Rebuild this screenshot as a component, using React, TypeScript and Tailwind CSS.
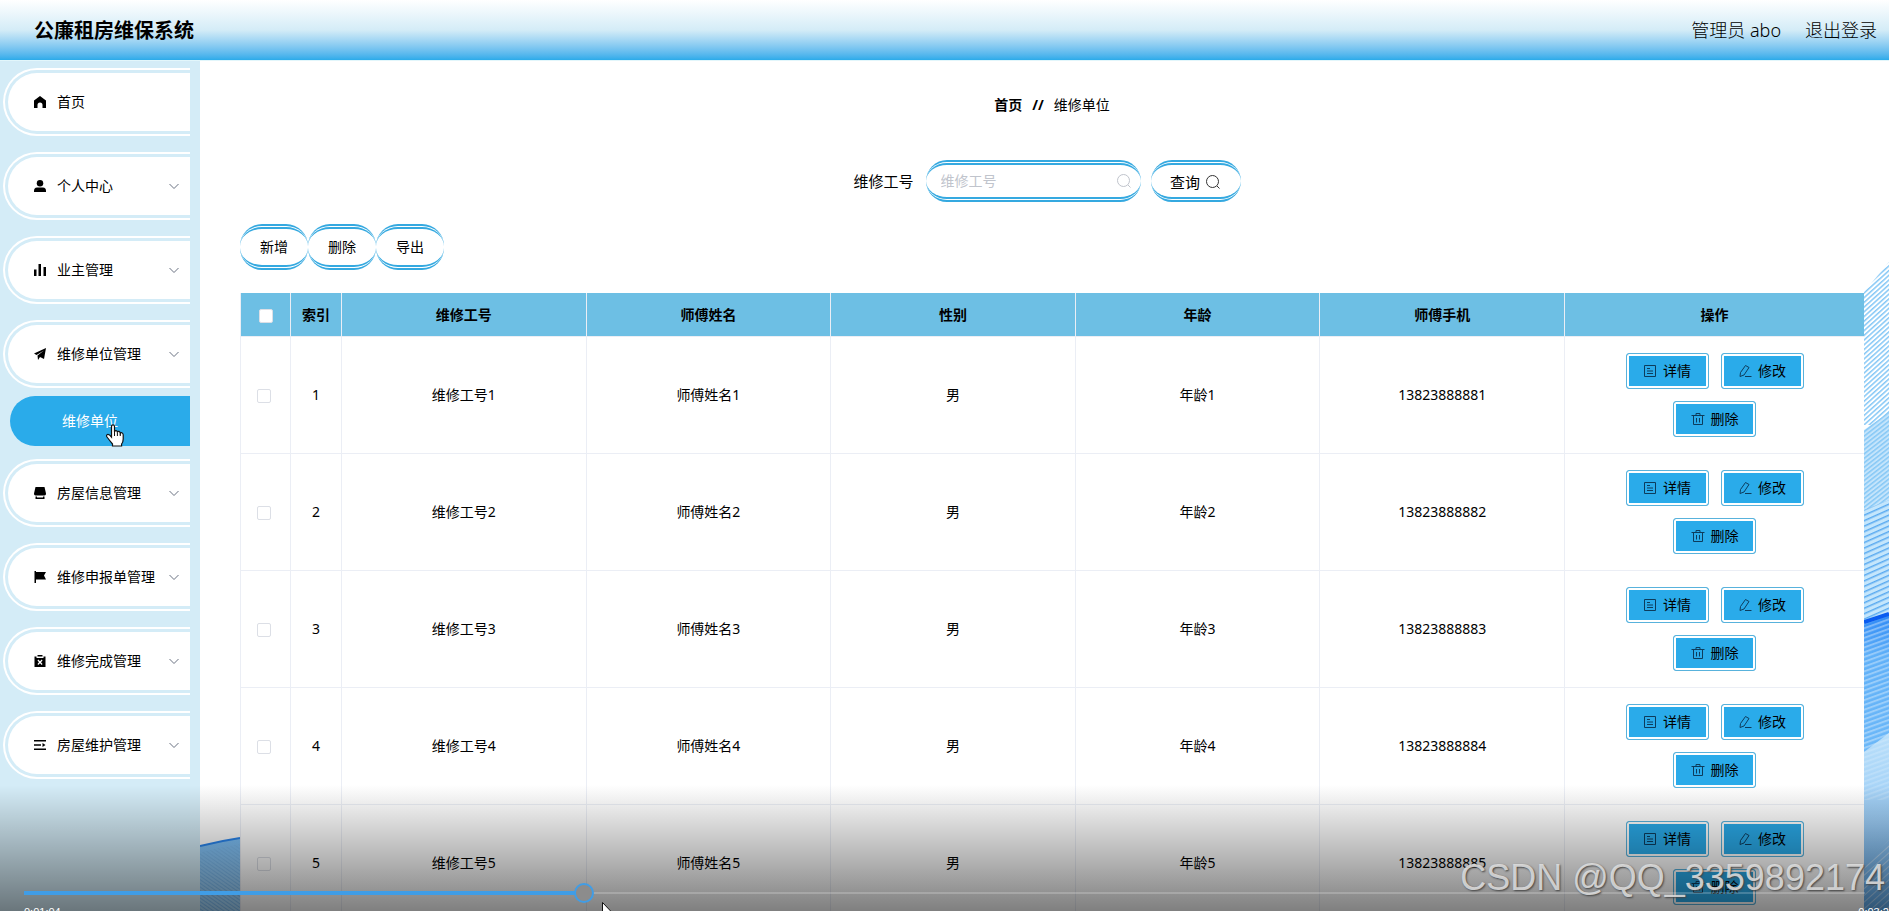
import React, { useState } from 'react';

type MenuItem = {
  title: string;
  icon: React.ReactNode;
  expandable?: boolean;
  children?: string[];
};

const menuItems: MenuItem[] = [
  {
    title: '首页',
    icon: <path d="M12 0 24 9v15h-7v-6a5 5 0 0 0-10 0v6H0V9z" />,
  },
  {
    title: '个人中心',
    expandable: true,
    icon: (
      <>
        <circle cx="12" cy="6.500" r="6.500" />
        <path d="M6 15h12c4 0 6 3 6 7v2H0v-2c0-4 2-7 6-7z" />
      </>
    ),
  },
  {
    title: '业主管理',
    expandable: true,
    icon: <path d="M0 11h5v13H0zM9 0h5v24H9zM19 6h5v18h-5z" />,
  },
  {
    title: '维修单位管理',
    expandable: true,
    children: ['维修单位'],
    icon: <path d="M24 0 20 22l-8-4-4 6-1-9L20 5 5 14l-5-3z" />,
  },
  {
    title: '房屋信息管理',
    expandable: true,
    icon: <path d="M3 0h18l3 13c0 2-1 4-3 4H3c-2 0-3-2-3-4zM3 19h3v2h12v-2h3v5H3z" />,
  },
  {
    title: '维修申报单管理',
    expandable: true,
    icon: <path d="M1 0h3v2h20l-4 7 4 8H4v7H1z" />,
  },
  {
    title: '维修完成管理',
    expandable: true,
    icon: (
      <>
        <path d="M7 0h10v3H7z" />
        <path
          fillRule="evenodd"
          d="M1 3h4v3h14V3h4v21H1zM7 11l3 3.500L7 18l1.500 2 3.500-3.500 3.500 3.500 1.500-2-3-3.500 3-3.500L15.500 9 12 12.500 8.500 9z"
        />
      </>
    ),
  },
  {
    title: '房屋维护管理',
    expandable: true,
    icon: <path d="M0 2h24v3H0zM0 10.500h14v3H0zM0 19h24v3H0zM17 8l6 4-6 4z" />,
  },
];

const workers = [1, 2, 3, 4, 5].map((n) => ({
  index: n,
  workNo: `维修工号${n}`,
  name: `师傅姓名${n}`,
  gender: '男',
  age: `年龄${n}`,
  phone: `1382388888${n}`,
}));

const columns = ['维修工号', '师傅姓名', '性别', '年龄', '师傅手机'];

const pill =
  'rounded-[22px] border-y-[5px] border-double border-[#35a9e0] bg-white text-black';

function SearchIcon({ className }: { className: string }) {
  return (
    <svg viewBox="0 0 16 16" className={className} fill="none" stroke="currentColor" aria-hidden="true">
      <circle cx="7.500" cy="7.500" r="6" />
      <path d="m12 12 2.500 2.500" />
    </svg>
  );
}

function ChevronIcon() {
  return (
    <svg viewBox="0 0 12 12" className="mr-2.5 h-3 w-3 shrink-0 text-gray-500" fill="none" stroke="currentColor">
      <path d="m1.500 4 4.500 4.500L10.500 4" />
    </svg>
  );
}

function Header() {
  return (
    <header className="flex h-[60px] shrink-0 items-center justify-between bg-linear-to-b from-white via-[#d4ecf7] to-[#2aabea] pr-3 pl-[34px]">
      <h1 className="pt-0.5 text-xl font-bold text-black">公廉租房维保系统</h1>
      <div className="flex items-center gap-6 text-lg font-light text-black">
        <span>管理员 abo</span>
        <button type="button">退出登录</button>
      </div>
    </header>
  );
}

function Sidebar() {
  return (
    <nav className="w-[200px] shrink-0 bg-[#d4ecf7] pt-[7px] pr-2.5 pl-[3px]">
      <ul className="flex flex-col gap-4">
        {menuItems.map((item) => (
          <li key={item.title}>
            <div className="rounded-l-[34px] border-2 border-r-0 border-white py-[3px] pl-[3px]">
              <button
                type="button"
                className="flex h-[58px] w-full items-center rounded-l-[30px] bg-white pl-[26px] text-left text-sm text-black"
              >
                <svg viewBox="0 0 24 24" className="mr-[11px] h-3 w-3 shrink-0" fill="currentColor">
                  {item.icon}
                </svg>
                <span className="flex-1 whitespace-nowrap">{item.title}</span>
                {item.expandable && <ChevronIcon />}
              </button>
            </div>
            {item.children && (
              <ul className="mt-2 -mb-[3px] pl-[7px]">
                {item.children.map((child) => (
                  <li key={child}>
                    <a
                      href="#repair"
                      className="flex h-[50px] items-center rounded-l-[26px] bg-[#2aabea] pl-[52px] text-sm text-white"
                    >
                      {child}
                    </a>
                  </li>
                ))}
              </ul>
            )}
          </li>
        ))}
      </ul>
    </nav>
  );
}

/* Blue wave artwork that shows behind the content */
function WaveBackground() {
  return (
    <>
      <svg viewBox="0 61 25 850" className="absolute right-0 bottom-0 h-[850px] w-[25px]" aria-hidden="true">
        <defs>
          <pattern id="diag" width="5" height="3.500" patternUnits="userSpaceOnUse" patternTransform="rotate(-42)">
            <rect width="5" height="1.500" fill="#86c8f6" />
          </pattern>
          <pattern id="diagSoft" width="5" height="3.500" patternUnits="userSpaceOnUse" patternTransform="rotate(-38)">
            <rect width="5" height="3.500" fill="#c4e4fb" />
            <rect width="5" height="1.500" fill="#86c8f6" />
          </pattern>
          <pattern id="wave" width="5" height="5" patternUnits="userSpaceOnUse" patternTransform="rotate(-24)">
            <rect width="5" height="5" fill="#c4e6fc" />
            <rect width="5" height="1.500" fill="#5aaaf0" />
          </pattern>
          <pattern id="band" width="5" height="4.500" patternUnits="userSpaceOnUse" patternTransform="rotate(-20)">
            <rect width="5" height="2" fill="#ffffff" fillOpacity=".35" />
          </pattern>
          <pattern id="faint" width="5" height="5" patternUnits="userSpaceOnUse" patternTransform="rotate(-42)">
            <rect width="5" height="1" fill="#ffffff" fillOpacity=".4" />
          </pattern>
          <linearGradient id="bandFill" x1="0" y1="0" x2="0" y2="1">
            <stop offset="0" stopColor="#2b87f5" />
            <stop offset=".3" stopColor="#5fb0f8" />
            <stop offset="1" stopColor="#6cb8f8" />
          </linearGradient>
          <linearGradient id="deep" x1="0" y1="0" x2="0" y2="1">
            <stop offset="0" stopColor="#b9dffa" />
            <stop offset=".5" stopColor="#9ccdf6" />
            <stop offset="1" stopColor="#5fa9ea" />
          </linearGradient>
        </defs>
        <path d="M0 292 25 262V425H0z" fill="url(#diag)" />
        <path d="M0 430 25 412V515H0z" fill="url(#diagSoft)" />
        <path d="M0 510 25 500V625H0z" fill="url(#wave)" />
        <path d="M0 621 25 613V755H0z" fill="url(#bandFill)" />
        <path d="M0 621 25 613V755H0z" fill="url(#band)" />
        <path d="M0 622 25 614" stroke="#0a5cf0" strokeWidth="4" />
        <path d="M0 752 25 733V911H0z" fill="url(#deep)" />
        <path d="M0 752 25 733V800H0z" fill="url(#band)" fillOpacity=".5" />
        <path d="M0 864 25 840V911H0z" fill="url(#faint)" />
      </svg>
      <svg viewBox="0 0 40 76" className="absolute bottom-0 left-0 h-[76px] w-10" aria-hidden="true">
        <defs>
          <pattern id="fine" width="4" height="3" patternUnits="userSpaceOnUse" patternTransform="rotate(35)">
            <rect width="4" height="1" fill="#7dbcf0" />
          </pattern>
          <linearGradient id="hill" x1="0" y1="0" x2="0" y2="1">
            <stop offset="0" stopColor="#7cc0f8" />
            <stop offset="1" stopColor="#a8d8fa" />
          </linearGradient>
        </defs>
        <path d="M0 11Q20 6 40 3V76H0z" fill="url(#hill)" />
        <path d="M0 18Q20 12 40 9V76H0z" fill="url(#fine)" />
        <path d="M0 11Q20 6 40 3" fill="none" stroke="#2a86ee" strokeWidth="2" />
      </svg>
    </>
  );
}

const actions = [
  {
    label: '详情',
    icon: (
      <>
        <path d="M1.500 1.500h11v11h-11z" />
        <path d="M4 4.500h3M4 7h6M4 9.500h6" />
      </>
    ),
  },
  {
    label: '修改',
    icon: (
      <>
        <path d="M7.500 1.500 11 3.500 6 11l-4 1.500L2.500 8.500z" />
        <path d="M7 12.500h6.500" />
      </>
    ),
  },
  {
    label: '删除',
    icon: (
      <>
        <path d="M.5 3.500h13M5 3.500v-2h4v2M2.500 3.500v9h9v-9" />
        <path d="M5.500 6v4.500M8.500 6v4.500" />
      </>
    ),
  },
];

function ActionButtons() {
  return (
    <div className="flex flex-wrap justify-center gap-3 px-10">
      {actions.map((action) => (
        <button
          key={action.label}
          type="button"
          className="flex h-9 w-[83px] items-center justify-center gap-1.5 rounded-[3px] border border-[#58b2dc] bg-[#2aabea] text-sm text-black shadow-[inset_0_0_0_2px_#fff]"
        >
          <svg viewBox="0 0 14 14" className="h-3.5 w-3.5 text-[#0d3c5c]" fill="none" stroke="currentColor">
            {action.icon}
          </svg>
          {action.label}
        </button>
      ))}
    </div>
  );
}

function CheckBox({ label, checked, onChange }: { label: string; checked: boolean; onChange: () => void }) {
  return (
    <input
      type="checkbox"
      aria-label={label}
      checked={checked}
      onChange={onChange}
      className="h-3.5 w-3.5 appearance-none rounded-[2px] border border-[#dcdfe6] bg-white align-middle checked:bg-[#409eff]"
    />
  );
}

function WorkerTable() {
  const [selected, setSelected] = useState<number[]>([]);
  const allSelected = selected.length === workers.length;

  const toggleRow = (index: number) => {
    setSelected((prev) => (prev.includes(index) ? prev.filter((i) => i !== index) : [...prev, index]));
  };

  return (
    <table className="mt-[23px] w-full table-fixed border-separate border-spacing-0 border-l border-[#ebeef5] bg-white text-center text-sm text-black">
      <colgroup>
        <col className="w-[50px]" />
        <col className="w-[51px]" />
        <col />
        <col />
        <col />
        <col />
        <col />
        <col className="w-[299px]" />
      </colgroup>
      <thead>
        <tr className="h-11 bg-[#6dbfe4]">
          <th className="border-r border-b border-[#ebeef5]">
            <CheckBox
              label="全选"
              checked={allSelected}
              onChange={() => setSelected(allSelected ? [] : workers.map((w) => w.index))}
            />
          </th>
          <th className="border-r border-b border-[#ebeef5]">索引</th>
          {columns.map((column) => (
            <th key={column} className="border-r border-b border-[#ebeef5]">
              {column}
            </th>
          ))}
          <th className="border-b border-[#ebeef5]">操作</th>
        </tr>
      </thead>
      <tbody>
        {workers.map((worker) => (
          <tr key={worker.index} className="h-[117px]">
            <td className="border-r border-b border-[#ebeef5] pr-1">
              <CheckBox
                label={`选择${worker.workNo}`}
                checked={selected.includes(worker.index)}
                onChange={() => toggleRow(worker.index)}
              />
            </td>
            <td className="border-r border-b border-[#ebeef5]">{worker.index}</td>
            <td className="border-r border-b border-[#ebeef5]">{worker.workNo}</td>
            <td className="border-r border-b border-[#ebeef5]">{worker.name}</td>
            <td className="border-r border-b border-[#ebeef5]">{worker.gender}</td>
            <td className="border-r border-b border-[#ebeef5]">{worker.age}</td>
            <td className="border-r border-b border-[#ebeef5]">{worker.phone}</td>
            <td className="border-b border-[#ebeef5]">
              <ActionButtons />
            </td>
          </tr>
        ))}
      </tbody>
    </table>
  );
}

function MainContent() {
  const [keyword, setKeyword] = useState('');

  return (
    <main className="relative min-w-0 flex-1 overflow-hidden bg-white pt-[34px] pr-[25px] pl-10">
      <WaveBackground />
      <div className="relative">
        <div className="flex h-5 items-center justify-center gap-2.5 text-sm text-black">
          <a href="#home" className="font-bold">
            首页
          </a>
          <span className="font-bold">//</span>
          <span>维修单位</span>
        </div>

        <form className="mt-[45px] flex items-center justify-center" onSubmit={(e) => e.preventDefault()}>
          <label htmlFor="workNo" className="mr-3 text-[15px] text-black">
            维修工号
          </label>
          <div className={`${pill} mr-2.5 flex h-[42px] w-[215px] items-center pr-[9px] pl-[15px]`}>
            <input
              id="workNo"
              type="text"
              placeholder="维修工号"
              value={keyword}
              onChange={(e) => setKeyword(e.target.value)}
              className="min-w-0 flex-1 bg-transparent text-sm outline-none placeholder:text-[#c0c4cc]"
            />
            <SearchIcon className="h-4 w-4 text-[#c0c4cc]" />
          </div>
          <button
            type="submit"
            className={`${pill} mr-2.5 flex h-[42px] w-[90px] items-center justify-center gap-[5px] pt-0.5 text-[15px]`}
          >
            查询
            <SearchIcon className="h-4 w-4 text-[#333]" />
          </button>
        </form>

        <div className="mt-[22px] flex">
          <button type="button" className={`${pill} h-[46px] w-[68px] text-sm`}>
            新增
          </button>
          <button type="button" className={`${pill} h-[46px] w-[68px] text-sm`}>
            删除
          </button>
          <button type="button" className={`${pill} h-[46px] w-[68px] text-sm`}>
            导出
          </button>
        </div>

        <WorkerTable />
      </div>
    </main>
  );
}

function PlayerOverlay() {
  const [position, setPosition] = useState(30.2);

  return (
    <div className="absolute inset-x-0 bottom-0 h-[126px] overflow-hidden bg-linear-to-b from-transparent to-black/50 font-['Liberation_Sans',sans-serif]">
      <div className="relative mt-[98px] mr-6 ml-6 flex h-5 items-center">
        <div className="absolute inset-x-0 h-0.5 bg-white/20" />
        <div className="absolute left-0 h-1 bg-[#409de6]" style={{ width: `${position}%` }} />
        <input
          type="range"
          aria-label="播放进度"
          min="0"
          max="100"
          step="0.1"
          value={position}
          onChange={(e) => setPosition(Number(e.target.value))}
          className="relative h-5 w-full appearance-none bg-transparent [&::-webkit-slider-thumb]:h-5 [&::-webkit-slider-thumb]:w-5 [&::-webkit-slider-thumb]:appearance-none [&::-webkit-slider-thumb]:rounded-full [&::-webkit-slider-thumb]:border-2 [&::-webkit-slider-thumb]:border-solid [&::-webkit-slider-thumb]:border-[#409de6] [&::-webkit-slider-thumb]:bg-[#8c8c8c]"
        />
      </div>
      <div className="-mr-1.5 ml-6 flex justify-between pt-px text-[11px] leading-4 text-white">
        <span>0:01:04</span>
        <span>0:03:28</span>
      </div>
    </div>
  );
}

export default function App() {
  return (
    <div className="relative flex h-screen flex-col overflow-hidden bg-white font-['Noto_Sans','Noto_Sans_CJK_SC',sans-serif]">
      <Header />
      <div className="flex min-h-0 flex-1 border-t border-[#e2f6fb]">
        <Sidebar />
        <MainContent />
      </div>

      <PlayerOverlay />

      {/* Pointers */}
      <svg viewBox="0 0 18 23" className="absolute top-[424px] left-[106px] h-[23px] w-[18px]" fill="#fff" stroke="#111">
        <path
          d="M5.500 13V2.500Q5.500.8 7 .8t1.500 1.700V8q.3-1.500 1.600-1.300T11.400 8.500q.4-1.500 1.600-1.100t1.300 2q.5-1 1.600-.6t1.300 2V15q0 3-1.600 5v2H6.500v-2Q4 17 1 13q-1-2 .5-2.500T5.500 13z"
          strokeWidth="1.200"
        />
        <path d="M8.500 8v4M11.400 8.500V12M14.300 9.500V12" strokeWidth="1" />
      </svg>
      <svg viewBox="0 0 12 18" className="absolute top-[902px] left-[602px] h-[18px] w-3" fill="#fff" stroke="#111">
        <path d="M.5.5v15l3.500-3 2.500 5 2-1-2.500-5h5z" />
      </svg>

      <div className="absolute right-1 bottom-[13px] font-['Liberation_Sans',sans-serif] text-4xl leading-10 whitespace-nowrap text-[#e4e4e4]/85 [text-shadow:1px_1px_2px_#444]">
        CSDN @QQ_3359892174
      </div>
    </div>
  );
}
